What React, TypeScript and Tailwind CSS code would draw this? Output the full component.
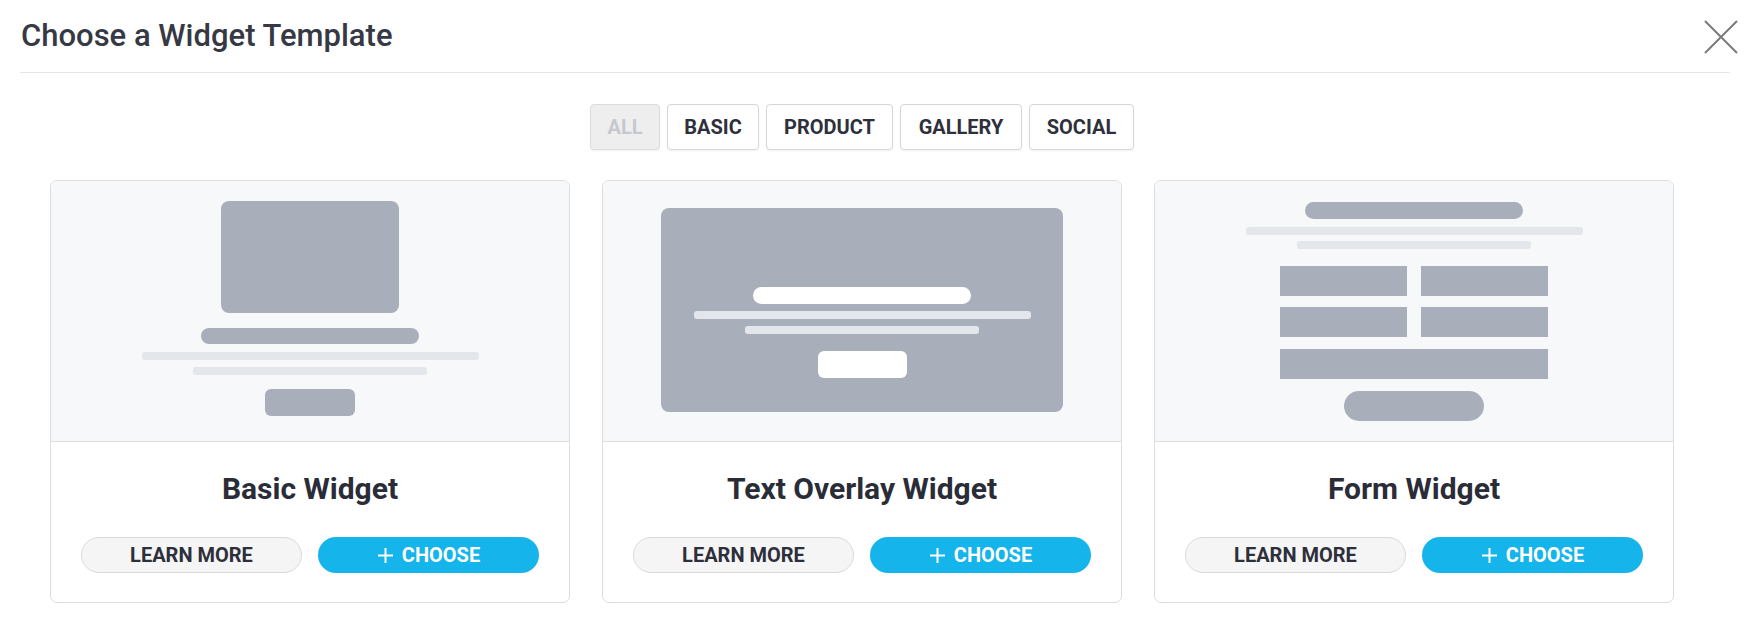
import { useState } from 'react'

const filters = [
  { name: 'ALL', width: 'w-[70px]' },
  { name: 'BASIC', width: 'w-[92px]' },
  { name: 'PRODUCT', width: 'w-[127px]' },
  { name: 'GALLERY', width: 'w-[122px]' },
  { name: 'SOCIAL', width: 'w-[105px]' },
]

function BasicMock() {
  return (
    <div className="flex flex-col items-center pt-[20px]">
      <div className="h-[112px] w-[178px] rounded-[8px] bg-[#a9afba]" />
      <div className="mt-[15px] h-[16px] w-[218px] rounded-full bg-[#a9afba]" />
      <div className="mt-[8px] h-[8px] w-[337px] rounded-[3px] bg-[#e3e6eb]" />
      <div className="mt-[7px] h-[8px] w-[234px] rounded-[3px] bg-[#e3e6eb]" />
      <div className="mt-[14px] h-[27px] w-[90px] rounded-[6px] bg-[#a9afba]" />
    </div>
  )
}

function OverlayMock() {
  return (
    <div className="flex flex-col items-center pt-[27px]">
      <div className="flex h-[204px] w-[402px] flex-col items-center rounded-[8px] bg-[#a9afba] pt-[79px]">
        <div className="h-[17px] w-[218px] rounded-full bg-white" />
        <div className="mt-[7px] h-[8px] w-[337px] rounded-[3px] bg-[#e3e6eb]" />
        <div className="mt-[7px] h-[8px] w-[234px] rounded-[3px] bg-[#e3e6eb]" />
        <div className="mt-[17px] h-[27px] w-[89px] rounded-[6px] bg-white" />
      </div>
    </div>
  )
}

function FormMock() {
  return (
    <div className="flex flex-col items-center pt-[21px]">
      <div className="h-[17px] w-[218px] rounded-full bg-[#a9afba]" />
      <div className="mt-[8px] h-[8px] w-[337px] rounded-[3px] bg-[#e3e6eb]" />
      <div className="mt-[6px] h-[8px] w-[234px] rounded-[3px] bg-[#e3e6eb]" />
      <div className="mt-[17px] grid w-[268px] grid-cols-2 gap-x-[14px] gap-y-[11px]">
        <div className="h-[30px] bg-[#a9afba]" />
        <div className="h-[30px] bg-[#a9afba]" />
        <div className="h-[30px] bg-[#a9afba]" />
        <div className="h-[30px] bg-[#a9afba]" />
      </div>
      <div className="mt-[12px] h-[30px] w-[268px] bg-[#a9afba]" />
      <div className="mt-[12px] h-[30px] w-[140px] rounded-full bg-[#a9afba]" />
    </div>
  )
}

const templates = [
  { name: 'Basic Widget', mock: BasicMock },
  { name: 'Text Overlay Widget', mock: OverlayMock },
  { name: 'Form Widget', mock: FormMock },
]

function PlusIcon() {
  return (
    <svg width="17" height="17" viewBox="0 0 17 17" className="shrink-0">
      <path d="M8.5 1v15M1 8.5h15" stroke="white" strokeWidth="2" />
    </svg>
  )
}

export default function App() {
  const [active, setActive] = useState('ALL')

  return (
    <div className="relative min-h-screen w-[1750px] bg-white font-['Roboto',sans-serif] text-[#363944]">
      {/* Header */}
      <div className="px-[20px]">
        <div className="flex h-[73px] items-center border-b border-[#e6e6e6]">
          <h1 className="pl-[1px] text-[31px] leading-[36px] font-medium">Choose a Widget Template</h1>
        </div>
      </div>
      <button className="absolute left-[1704px] top-[20px]">
        <svg width="34" height="34" viewBox="0 0 34 34">
          <path d="M1 1l32 32M33 1L1 33" stroke="#7b7b7b" strokeWidth="2" />
        </svg>
      </button>

      <div className="ml-[50px] w-[1624px]">
        {/* Filters */}
        <div className="mt-[31px] flex justify-center gap-[7px]">
          {filters.map((f) => {
            const isActive = active === f.name
            return (
              <button
                key={f.name}
                onClick={() => setActive(f.name)}
                className={
                  isActive
                    ? `${f.width} h-[46px] rounded-[4px] border border-[#dcdcdc] bg-[#eeeeee] text-[20px] font-bold text-[#c6c8ce] shadow-[0_1px_2px_rgba(0,0,0,0.06)]`
                    : `${f.width} h-[46px] rounded-[4px] border border-[#d6d6d6] bg-white text-[20px] font-bold text-[#2e303b] shadow-[0_1px_2px_rgba(0,0,0,0.06)]`
                }
              >
                {f.name}
              </button>
            )
          })}
        </div>

        {/* Cards */}
        <div className="mt-[30px] grid grid-cols-3 gap-[32px]">
          {templates.map((t) => (
            <div key={t.name} className="overflow-hidden rounded-[7px] border border-[#dddddd] bg-white">
              <div className="h-[261px] border-b border-[#dedede] bg-[#f7f8fa]">
                <t.mock />
              </div>
              <div className="flex flex-col items-center pt-[29px] pb-[29px]">
                <h2 className="text-[30px] leading-[36px] font-bold text-[#2a2d38]">{t.name}</h2>
                <div className="mt-[30px] flex gap-[16px]">
                  <button className="h-[36px] w-[221px] rounded-full border border-[#d9d9d9] bg-[#f5f5f5] text-[20px] font-bold text-[#2d2f3a]">
                    LEARN MORE
                  </button>
                  <button className="flex h-[36px] w-[221px] items-center justify-center gap-[8px] rounded-full bg-[#15b4ea] text-[20px] font-bold text-white">
                    <PlusIcon />
                    CHOOSE
                  </button>
                </div>
              </div>
            </div>
          ))}
        </div>
      </div>
    </div>
  )
}
